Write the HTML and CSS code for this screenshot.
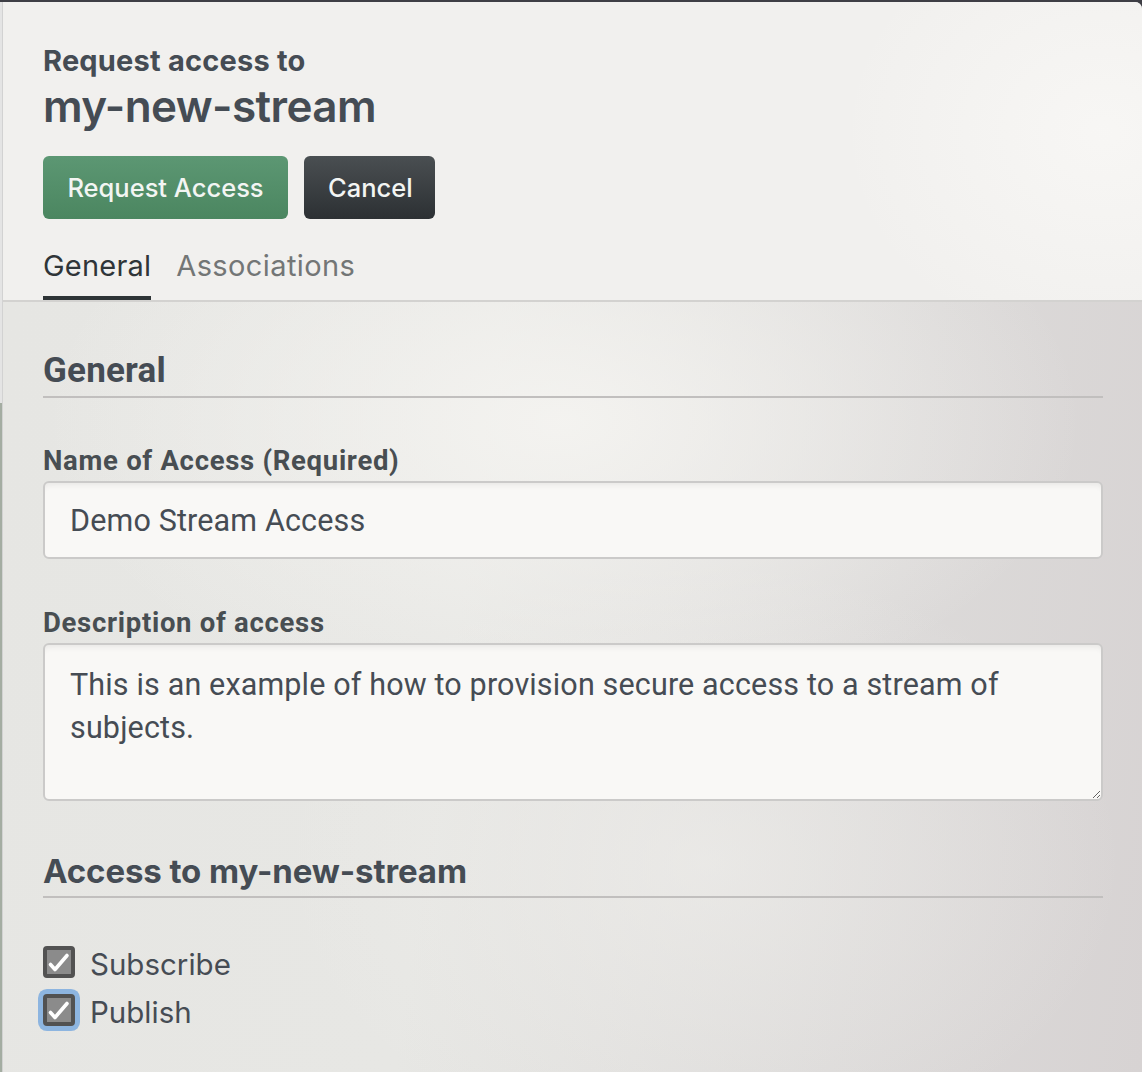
FILE: index.html
```html
<!DOCTYPE html>
<html lang="en">
<head>
<meta charset="utf-8">
<title>Request access</title>
<link rel="stylesheet" href="styles.css">
</head>
<body>
<div class="app">
  <div class="edge"></div>
  <div class="panel">
    <header class="head">
      <h1 class="title-small">Request access to</h1>
      <div class="title-big">my-new-stream</div>
      <div class="actions">
        <button class="btn btn-primary" type="button">Request Access</button>
        <button class="btn btn-dark" type="button">Cancel</button>
      </div>
      <nav class="tabs">
        <span class="tab tab-active">General</span>
        <span class="tab">Associations</span>
      </nav>
    </header>
    <main class="content">
      <h2 class="section-title">General</h2>
      <label class="field-label" for="name">Name of Access (Required)</label>
      <input class="field" id="name" type="text" value="Demo Stream Access">
      <label class="field-label label-desc" for="desc">Description of access</label>
      <textarea class="field area" id="desc">This is an example of how to provision secure access to a stream of subjects.</textarea>
      <h2 class="section-title section-access">Access to my-new-stream</h2>
      <div class="checks">
        <div class="check-row">
          <span class="box"><svg viewBox="0 0 24 24" width="24" height="24"><path d="M3.5 14.5 L8 19.5 L20 5.5" fill="none" stroke="#fff" stroke-width="3.6" stroke-linecap="round" stroke-linejoin="round"/></svg></span>
          <span class="check-text">Subscribe</span>
        </div>
        <div class="check-row">
          <span class="box box-focus"><svg viewBox="0 0 24 24" width="24" height="24"><path d="M3.5 14.5 L8 19.5 L20 5.5" fill="none" stroke="#fff" stroke-width="3.6" stroke-linecap="round" stroke-linejoin="round"/></svg></span>
          <span class="check-text">Publish</span>
        </div>
      </div>
    </main>
  </div>
</div>
</body>
</html>
```
FILE: styles.css
```css
* { box-sizing: border-box; }
html, body { margin: 0; padding: 0; }
body { background: #3e3e45; }

.app {
  display: flex;
  min-height: 1072px;
  padding-top: 2px;
  background: #3e3e45;
}
.edge {
  width: 3px;
  flex: none;
  background: linear-gradient(to bottom, #e4e4e4 0, #e4e4e4 401px, #a4ada2 401px, #a4ada2 100%);
  border-right: 1px solid #d2d2d2;
}
.panel {
  flex: 1;
  display: flex;
  flex-direction: column;
  border-top-right-radius: 7px;
  overflow: hidden;
  background: #e4e4e1;
}

.head {
  padding: 42px 39px 0 40px;
  background:
    radial-gradient(ellipse 260px 220px at 1100px 130px, rgba(248,247,245,0.9), rgba(248,247,245,0) 100%),
    linear-gradient(90deg, #f1f0ee 0%, #f1f0ee 100%);
  border-bottom: 2px solid #d3d2d0;
}
.title-small {
  margin: 0;
  font-family: Inter, "Liberation Sans", sans-serif;
  font-weight: 700;
  font-size: 29px;
  line-height: 34px;
  letter-spacing: 0.2px;
  color: #454c54;
}
.title-big {
  margin-top: 2px;
  font-family: Inter, "Liberation Sans", sans-serif;
  font-weight: 600;
  font-size: 44px;
  line-height: 52px;
  letter-spacing: -0.6px;
  color: #454c54;
}
.actions {
  display: flex;
  gap: 16px;
  margin-top: 24px;
}
.btn {
  height: 63px;
  padding: 0 24px;
  border: none;
  border-radius: 6px;
  font-family: Inter, "Liberation Sans", sans-serif;
  font-weight: 500;
  font-size: 25.5px;
  color: #f3f5f3;
}
.btn-primary {
  width: 245px;
  background: linear-gradient(to bottom, #5c9773, #4b8660);
}
.btn-dark {
  width: 131px;
  background: linear-gradient(to bottom, #4a4f52, #2c3033);
}
.tabs {
  display: flex;
  gap: 25px;
  margin-top: 29px;
}
.tab {
  font-family: Inter, "Liberation Sans", sans-serif;
  font-size: 29px;
  line-height: 36px;
  letter-spacing: 0.4px;
  padding-bottom: 12px;
  border-bottom: 4px solid transparent;
  color: #737676;
}
.tab-active {
  color: #2f3538;
  border-bottom-color: #2e3436;
  letter-spacing: 0.2px;
}

.content {
  flex: 1;
  padding: 49px 39px 40px 40px;
  background:
    radial-gradient(ellipse 520px 300px at 560px 120px, rgba(246,245,242,0.85), rgba(246,245,242,0) 100%),
    radial-gradient(ellipse 420px 300px at 700px 560px, rgba(240,239,236,0.6), rgba(240,239,236,0) 100%),
    linear-gradient(98deg, #e6e6e3 0%, #e7e7e4 40%, #dcdad9 75%, #d7d3d3 100%);
}
.section-title {
  margin: 0;
  font-family: Roboto, "Liberation Sans", sans-serif;
  font-weight: 700;
  font-size: 35px;
  line-height: 40px;
  letter-spacing: 0.2px;
  color: #454c54;
  padding-bottom: 5px;
  border-bottom: 2px solid #c1bfbe;
}
.field-label {
  display: block;
  margin-top: 47px;
  font-family: Roboto, "Liberation Sans", sans-serif;
  font-weight: 700;
  font-size: 27.5px;
  line-height: 32px;
  letter-spacing: 0.7px;
  color: #484e52;
}
.label-desc { margin-top: 48px; }
.field {
  display: block;
  width: 100%;
  margin-top: 4px;
  height: 78px;
  padding: 0 25px;
  border: 2px solid #cbcac9;
  border-radius: 6px;
  background: #f9f8f6;
  box-shadow: inset 0 7px 6px -5px rgba(0,0,0,0.07);
  font-family: Roboto, "Liberation Sans", sans-serif;
  font-size: 30.5px;
  letter-spacing: 0.15px;
  color: #464c54;
  outline: none;
}
.area {
  height: 158px;
  padding: 18px 25px;
  line-height: 43px;
  resize: vertical;
}
.section-access {
  margin-top: 50px;
  font-family: Inter, "Liberation Sans", sans-serif;
  font-size: 33px;
  letter-spacing: -0.1px;
}
.checks {
  margin-top: 48px;
  display: flex;
  flex-direction: column;
  gap: 16px;
}
.check-row {
  display: flex;
  align-items: center;
  gap: 15px;
  height: 32px;
}
.box {
  width: 32px;
  height: 32px;
  flex: none;
  border: 4px solid #525252;
  border-radius: 4px;
  background: #8b8b8b;
  display: flex;
}
.box svg { display: block; }
.box-focus {
  box-shadow: 0 0 0 5px #8db5e0;
}
.check-text {
  font-family: Inter, "Liberation Sans", sans-serif;
  font-size: 29.5px;
  line-height: 32px;
  padding-top: 3px;
  color: #464c54;
}
```
